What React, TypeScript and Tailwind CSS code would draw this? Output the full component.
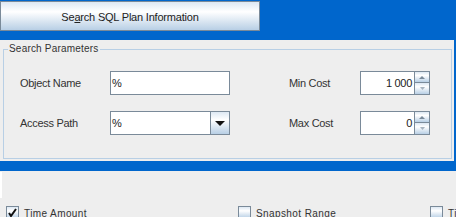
import React from "react";

function TextField({ value, align = "left" }: { value: string; align?: "left" | "right" }) {
  return (
    <div
      className={`h-[24px] w-full bg-white border border-[#7a8a99] flex items-center text-[11px] text-[#222] ${
        align === "right" ? "justify-end pr-[2px]" : "pl-[1px]"
      }`}
    >
      {value}
    </div>
  );
}

function Combo({ value }: { value: string }) {
  return (
    <div className="h-[24px] w-[120px] flex">
      <div className="flex-1 h-full bg-white border border-[#7a8a99] border-r-0 flex items-center pl-[1px] text-[11px] text-[#222]">
        {value}
      </div>
      <div className="w-[20px] h-full border border-[#7a8a99] bg-[linear-gradient(to_bottom,#dde8f3_0%,#ffffff_35%,#b8cfe5_100%)] flex items-center justify-center">
        <svg width="10" height="5" viewBox="0 0 10 5">
          <path d="M0 0 H10 L5 5 Z" fill="#111" />
        </svg>
      </div>
    </div>
  );
}

function Spinner({ value }: { value: string }) {
  return (
    <div className="h-[24px] w-[70px] flex">
      <div className="w-[54px] h-full bg-white border border-[#7a8a99] border-r-0 flex items-center justify-end pr-[2px] text-[11px] text-[#222]">
        {value}
      </div>
      <div className="w-[16px] h-full flex flex-col">
        <div className="h-[12px] border border-[#7a8a99] bg-[linear-gradient(to_bottom,#dde8f3_0%,#ffffff_35%,#b8cfe5_100%)] flex items-center justify-center">
          <svg width="6" height="3" viewBox="0 0 6 3">
            <path d="M0 3 H6 L3 0 Z" fill="#7a8a99" />
          </svg>
        </div>
        <div className="h-[12px] border border-t-0 border-[#7a8a99] bg-[linear-gradient(to_bottom,#dde8f3_0%,#ffffff_35%,#b8cfe5_100%)] flex items-center justify-center">
          <svg width="5" height="3" viewBox="0 0 5 3">
            <path d="M0 0 H5 L2.5 3 Z" fill="#a8b4c0" />
          </svg>
        </div>
      </div>
    </div>
  );
}

function CheckBox({ checked, label, width }: { checked?: boolean; label: string; width: string }) {
  return (
    <div className={`flex shrink-0 items-start gap-[5px] ${width}`}>
      <div className="w-[13px] h-[13px] shrink-0 border border-[#7a8a99] bg-[linear-gradient(to_bottom,#dde8f3_0%,#ffffff_35%,#b8cfe5_100%)] flex items-center justify-center">
        {checked && (
          <svg width="11" height="11" viewBox="0 0 11 11">
            <path d="M2 6 L4 9 L9 2" stroke="#111" strokeWidth="2" fill="none" />
          </svg>
        )}
      </div>
      <span className="text-[10px] leading-[12px] tracking-[0.4px] text-[#333] mt-[2px] whitespace-nowrap">{label}</span>
    </div>
  );
}

export default function App() {
  return (
    <div className="w-[456px] h-[217px] overflow-hidden bg-[#0066cc] font-['Liberation_Sans',Arial,sans-serif] text-[#333333]">
      <div className="h-[40px] pt-[1px]">
        <button className="w-[260px] h-[30px] border border-[#7a8a99] bg-[linear-gradient(to_bottom,#dde8f3_0%,#ffffff_35%,#b8cfe5_100%)] text-[11px] tracking-[-0.2px] text-[#222] flex items-center justify-center pt-[2px]">
          <span>
            Se<span className="underline">a</span>rch SQL Plan Information
          </span>
        </button>
      </div>

      <div className="w-[454px] h-[121px] bg-[#eeeeee] pl-[3px] pr-[2px] pt-[3px]">
        <fieldset className="h-[116px] border border-[#b8cfe5]">
          <legend className="ml-[4px] px-[1px] text-[10px] leading-[12px] tracking-[0.2px] text-[#333]">
            Search Parameters
          </legend>
          <div className="mt-[16px] pl-[16px] grid grid-cols-[90px_120px_59px_71px_70px] gap-y-[16px] items-center text-[11px] tracking-[-0.3px] text-[#333]">
            <span>Object Name</span>
            <TextField value="%" />
            <span />
            <span>Min Cost</span>
            <Spinner value="1 000" />

            <span>Access Path</span>
            <Combo value="%" />
            <span />
            <span>Max Cost</span>
            <Spinner value="0" />
          </div>
        </fieldset>
      </div>

      <div className="h-[10px]" />

      <div className="h-[46px] bg-[#eeeeee] overflow-hidden">
        <div className="h-[26px] mt-[1px] flex">
          <div className="w-[2px] h-full bg-white" />
        </div>
        <div className="mt-[8px] pl-[6px] flex">
          <CheckBox checked label="Time Amount" width="w-[232px]" />
          <CheckBox label="Snapshot Range" width="w-[192px]" />
          <CheckBox label="Time Interval" width="w-[100px]" />
        </div>
      </div>
    </div>
  );
}
